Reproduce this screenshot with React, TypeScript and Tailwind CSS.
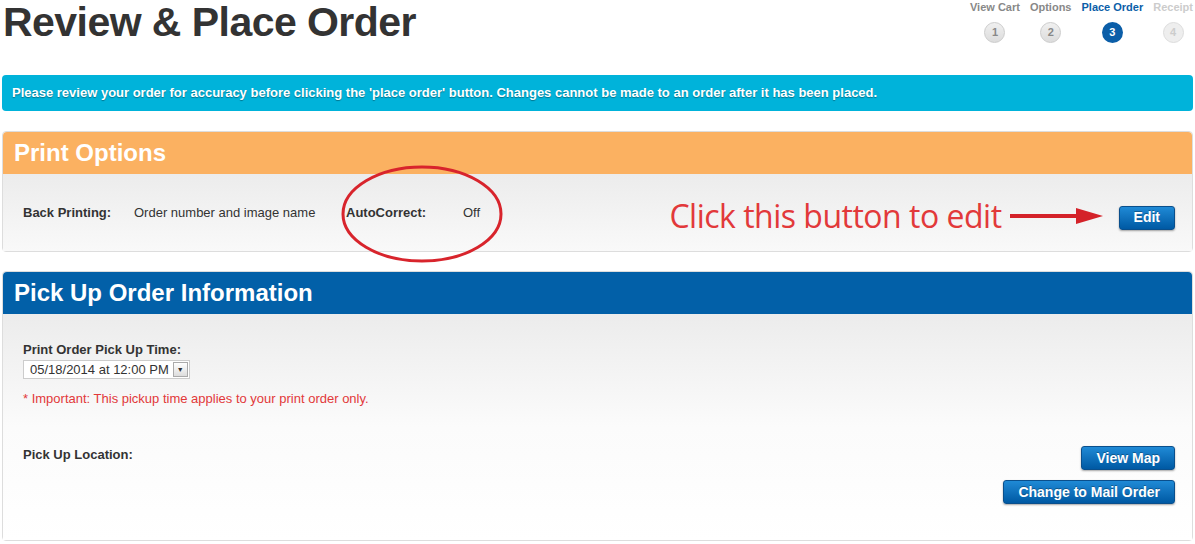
import React from 'react';

const steps = [
  { label: 'View Cart', n: 1, state: 'done' },
  { label: 'Options', n: 2, state: 'done' },
  { label: 'Place Order', n: 3, state: 'active' },
  { label: 'Receipt', n: 4, state: 'todo' },
];

function BlueButton({ children, className = '' }: { children: React.ReactNode; className?: string }) {
  return (
    <button
      className={
        'rounded-[3px] border border-[#0a4f8c] bg-gradient-to-b from-[#1f8ad6] to-[#0059a3] px-[14px] text-[14px] font-bold leading-[21px] text-white shadow-[0_1px_2px_rgba(0,0,0,0.35)] [text-shadow:0_-1px_0_rgba(0,0,0,0.3)] ' +
        className
      }
    >
      {children}
    </button>
  );
}

export default function App() {
  return (
    <div className="h-[544px] w-[1195px] overflow-hidden bg-white font-['Liberation_Sans',Arial,sans-serif] text-[#333]">
      {/* header */}
      <div className="flex h-[75px] items-start justify-between">
        <h1 className="ml-[3px] text-[41px] font-bold leading-[44px] tracking-[-0.55px] text-[#333]">
          Review &amp; Place Order
        </h1>
        <div className="mr-[2px] mt-[1px] flex gap-[10px]">
          {steps.map((s) => (
            <div key={s.n} className="flex flex-col items-center">
              <span
                className={
                  'text-[11px] font-bold leading-[13px] ' +
                  (s.state === 'active' ? 'text-[#0b5ea8]' : s.state === 'done' ? 'text-[#888]' : 'text-[#ccc]')
                }
              >
                {s.label}
              </span>
              <span
                className={
                  'mt-[8px] flex h-[21px] w-[21px] items-center justify-center rounded-full text-[11px] font-bold ' +
                  (s.state === 'active'
                    ? 'bg-[#0b5ea8] text-white'
                    : s.state === 'done'
                      ? 'border border-[#ccc] bg-gradient-to-b from-[#f0f0f0] to-[#dcdcdc] text-[#888]'
                      : 'border border-[#ddd] bg-[#eee] text-[#ccc]')
                }
              >
                {s.n}
              </span>
            </div>
          ))}
        </div>
      </div>

      {/* notice */}
      <div className="mx-[2px] flex h-[36px] items-center rounded-[4px] bg-[#00b3da] pl-[10px] text-[13px] font-bold text-white [text-shadow:0_1px_1px_rgba(0,0,0,0.35)]">
        Please review your order for accuracy before clicking the 'place order' button. Changes cannot be made to an order after it has been placed.
      </div>

      {/* print options */}
      <div className="relative mx-[2px] mt-[20px] overflow-visible rounded-[4px] border border-[#ddd]">
        <div className="flex h-[42px] items-center rounded-t-[4px] bg-[#fbb161] pl-[11px] text-[24px] font-bold text-white">
          Print Options
        </div>
        <div className="flex h-[77px] items-center bg-gradient-to-b from-[#ececec] to-[#f9f9f9] pl-[20px] pr-[17px] text-[13px]">
          <span className="w-[111px] font-bold">Back Printing:</span>
          <span className="w-[212px]">Order number and image name</span>
          <span className="w-[117px] font-bold">AutoCorrect:</span>
          <span>Off</span>
          <span className="ml-auto mr-[8px] mt-[6px] font-['Open_Sans',sans-serif] text-[32px] leading-none tracking-[-0.5px] text-[#e2393a]">
            Click this button to edit
          </span>
          <svg width="94" height="16" viewBox="0 0 94 16" className="mr-[15px] mt-[6px]">
            <line x1="0" y1="8" x2="72" y2="8" stroke="#d42229" strokeWidth="4" />
            <polygon points="66,0 93,8 66,16" fill="#d42229" />
          </svg>
          <BlueButton className="mt-[10px] h-[24px] px-[13px] text-[13px] leading-[20px]">Edit</BlueButton>
        </div>
        <svg
          className="pointer-events-none absolute left-[335px] top-[31px]"
          width="168"
          height="102"
          viewBox="0 0 168 102"
        >
          <ellipse cx="84" cy="51" rx="79" ry="47" fill="none" stroke="#d8242c" strokeWidth="3" />
        </svg>
      </div>

      {/* pick up */}
      <div className="mx-[2px] mt-[19px] rounded-[4px] border border-[#ddd]">
        <div className="flex h-[42px] items-center rounded-t-[4px] bg-[#0260a8] pl-[11px] text-[24px] font-bold text-white">
          Pick Up Order Information
        </div>
        <div className="h-[226px] bg-gradient-to-b from-[#ececec] via-[#fbfbfb] to-white pl-[20px] pr-[17px] pt-[29px]">
          <div className="text-[13px] font-bold leading-[14px]">Print Order Pick Up Time:</div>
          <div className="inline-flex h-[19px] items-center border border-[#ccc] bg-white pl-[6px] pr-[1px] text-[13px]">
            <span className="mr-[4px]">05/18/2014 at 12:00 PM</span>
            <span className="flex h-[15px] w-[15px] items-center justify-center border border-[#aaa] bg-gradient-to-b from-white to-[#ddd] text-[7px]">
              ▼
            </span>
          </div>
          <div className="mt-[10px] text-[13px] leading-[15px] text-[#e2393a]">
            * Important: This pickup time applies to your print order only.
          </div>
          <div className="mt-[41px] flex items-start justify-between">
            <span className="mt-[0px] text-[13px] font-bold leading-[15px]">Pick Up Location:</span>
            <div className="mt-[-1px] flex flex-col items-end gap-[10px]">
              <BlueButton className="h-[24px]">View Map</BlueButton>
              <BlueButton className="h-[24px]">Change to Mail Order</BlueButton>
            </div>
          </div>
        </div>
      </div>
    </div>
  );
}
